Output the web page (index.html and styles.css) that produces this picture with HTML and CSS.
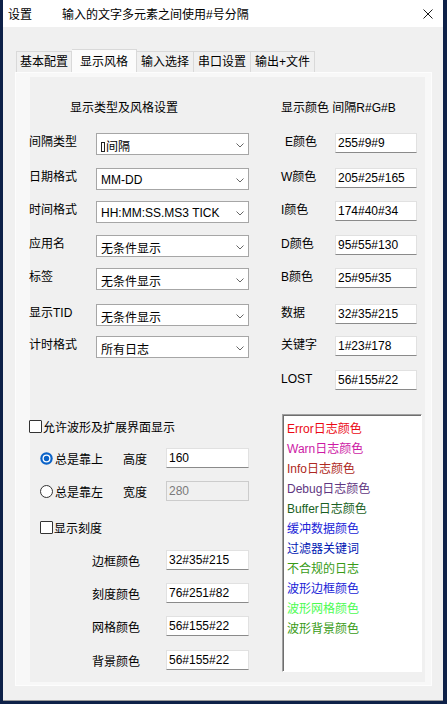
FILE: index.html
```html
<!DOCTYPE html>
<html lang="zh-CN">
<head>
    <meta charset="UTF-8">
    <meta name="viewport" content="width=device-width, initial-scale=1.0">
    <title>设置</title>
    <link rel="stylesheet" href="styles.css">
</head>
<body>

    <div class="window">
        <div class="titlebar">
            <span class="title-app">设置</span>
            <span class="title-hint">输入的文字多元素之间使用#号分隔</span>
            <svg class="close" width="10" height="10" viewBox="0 0 10 10"><path d="M0.5 0.5 L9.5 9.5 M9.5 0.5 L0.5 9.5" stroke="#1a1a1a" stroke-width="1" fill="none"/></svg>
        </div>

        <div class="tabs">
            <div class="tab">基本配置</div>
            <div class="tab active">显示风格</div>
            <div class="tab">输入选择</div>
            <div class="tab">串口设置</div>
            <div class="tab">输出+文件</div>
        </div>

        <div class="panel">
            <div class="form-grid">
                <div class="heading-left">显示类型及风格设置</div>
                <div class="heading-right">显示颜色 间隔R#G#B</div>

                <div class="lbl">间隔类型</div>
                <div class="combo"><span class="combo-text"><span class="tofu"></span>间隔</span><svg width="8" height="5" viewBox="0 0 8 5"><path d="M0.5 0.5 L4 4 L7.5 0.5" fill="none" stroke="#666"/></svg></div>
                <div class="rlbl e-lbl">E颜色</div>
                <input class="field" type="text" value="255#9#9">

                <div class="lbl">日期格式</div>
                <div class="combo"><span class="combo-text">MM-DD</span><svg width="8" height="5" viewBox="0 0 8 5"><path d="M0.5 0.5 L4 4 L7.5 0.5" fill="none" stroke="#666"/></svg></div>
                <div class="rlbl">W颜色</div>
                <input class="field" type="text" value="205#25#165">

                <div class="lbl">时间格式</div>
                <div class="combo"><span class="combo-text">HH:MM:SS.MS3 TICK</span><svg width="8" height="5" viewBox="0 0 8 5"><path d="M0.5 0.5 L4 4 L7.5 0.5" fill="none" stroke="#666"/></svg></div>
                <div class="rlbl">I颜色</div>
                <input class="field" type="text" value="174#40#34">

                <div class="lbl">应用名</div>
                <div class="combo"><span class="combo-text">无条件显示</span><svg width="8" height="5" viewBox="0 0 8 5"><path d="M0.5 0.5 L4 4 L7.5 0.5" fill="none" stroke="#666"/></svg></div>
                <div class="rlbl">D颜色</div>
                <input class="field" type="text" value="95#55#130">

                <div class="lbl">标签</div>
                <div class="combo"><span class="combo-text">无条件显示</span><svg width="8" height="5" viewBox="0 0 8 5"><path d="M0.5 0.5 L4 4 L7.5 0.5" fill="none" stroke="#666"/></svg></div>
                <div class="rlbl">B颜色</div>
                <input class="field" type="text" value="25#95#35">

                <div class="lbl">显示TID</div>
                <div class="combo"><span class="combo-text">无条件显示</span><svg width="8" height="5" viewBox="0 0 8 5"><path d="M0.5 0.5 L4 4 L7.5 0.5" fill="none" stroke="#666"/></svg></div>
                <div class="rlbl">数据</div>
                <input class="field" type="text" value="32#35#215">

                <div class="lbl">计时格式</div>
                <div class="combo"><span class="combo-text">所有日志</span><svg width="8" height="5" viewBox="0 0 8 5"><path d="M0.5 0.5 L4 4 L7.5 0.5" fill="none" stroke="#666"/></svg></div>
                <div class="rlbl">关键字</div>
                <input class="field" type="text" value="1#23#178">

                <div class="rlbl lost">LOST</div>
                <input class="field" type="text" value="56#155#22">
            </div>

            <div class="lower">
                <div class="lower-left">
                    <div class="check-row">
                        <span class="check"></span>允许波形及扩展界面显示
                    </div>
                    <div class="radio-row first">
                        <svg class="radio" width="13" height="13" viewBox="0 0 13 13"><circle cx="6.5" cy="6.5" r="6.2" fill="#0b63c8"/><circle cx="6.5" cy="6.5" r="4" fill="#fff"/><circle cx="6.5" cy="6.5" r="2.7" fill="#0b63c8"/></svg>
                        <span class="radio-text">总是靠上</span>
                        <span class="mini-lbl">高度</span>
                        <input class="field wide" type="text" value="160">
                    </div>
                    <div class="radio-row">
                        <svg class="radio" width="13" height="13" viewBox="0 0 13 13"><circle cx="6.5" cy="6.5" r="6" fill="#fff" stroke="#333" stroke-width="1"/></svg>
                        <span class="radio-text">总是靠左</span>
                        <span class="mini-lbl">宽度</span>
                        <input class="field wide" type="text" value="280" disabled>
                    </div>
                    <div class="check-row sub">
                        <span class="check"></span>显示刻度
                    </div>
                    <div class="color-row r1">
                        <span class="color-lbl">边框颜色</span>
                        <input class="field wide" type="text" value="32#35#215">
                    </div>
                    <div class="color-row">
                        <span class="color-lbl">刻度颜色</span>
                        <input class="field wide" type="text" value="76#251#82">
                    </div>
                    <div class="color-row">
                        <span class="color-lbl">网格颜色</span>
                        <input class="field wide" type="text" value="56#155#22">
                    </div>
                    <div class="color-row r4">
                        <span class="color-lbl">背景颜色</span>
                        <input class="field wide" type="text" value="56#155#22">
                    </div>
                </div>

                <div class="listbox">
                    <div class="c-error">Error日志颜色</div>
                    <div class="c-warn">Warn日志颜色</div>
                    <div class="c-info">Info日志颜色</div>
                    <div class="c-debug">Debug日志颜色</div>
                    <div class="c-buffer">Buffer日志颜色</div>
                    <div class="c-data">缓冲数据颜色</div>
                    <div class="c-key">过滤器关键词</div>
                    <div class="c-lost">不合规的日志</div>
                    <div class="c-border">波形边框颜色</div>
                    <div class="c-grid">波形网格颜色</div>
                    <div class="c-bg">波形背景颜色</div>
                </div>
            </div>
        </div>
    </div>

</body>
</html>
```

FILE: styles.css
```css
/* Grundlayout */
body {
    margin: 0;
    background-color: #0e2148;
    font-family: "Liberation Sans", "Noto Sans CJK SC", sans-serif;
    font-size: 12px;
    color: #000;
}

.window {
    margin-left: 3px;
    width: 440px;
    height: 700px;
    background-color: #f0f0f0;
    border-bottom: 1px solid #9a9a9a;
}

/* Titelleiste */
.titlebar {
    height: 27px;
    background-color: #fff;
    display: flex;
    align-items: center;
    padding: 0 10px 0 5px;
}

.title-app {
    width: 54px;
}

.title-hint {
    flex: 1;
}

/* Reiter */
.tabs {
    display: flex;
    align-items: flex-end;
    height: 24px;
    margin-top: 22px;
    padding-left: 13px;
}

.tab {
    box-sizing: border-box;
    height: 22px;
    line-height: 21px;
    padding: 0 4px;
    border: 1px solid #d9d9d9;
    border-bottom: none;
    border-left: none;
    background-color: #f0f0f0;
}

.tab:first-child {
    border-left: 1px solid #d9d9d9;
    padding: 0 3px;
}

.tab.active {
    height: 24px;
    line-height: 24px;
    padding: 0 8px;
    background-color: #fbfbfb;
}

.panel {
    box-sizing: border-box;
    width: 415px;
    height: 612px;
    margin-left: 13px;
    background-color: #f0f0f0;
    border-style: solid;
    border-color: #f8f8f8;
    border-width: 4px 6px 3px 14px;
    outline: 1px solid #fdfdfd;
}

/* Obere Einstellungen */
.form-grid {
    display: grid;
    grid-template-columns: 67px 153px 86px 82px;
    grid-template-rows: 33px 35px 33px 34px 33px 36px 32px 34px 22px;
    align-items: start;
    margin: 23px 0 0 -1px;
}

.heading-left {
    grid-column: 1 / span 2;
    padding-left: 41px;
    line-height: 16px;
}

.heading-right {
    grid-column: 3 / span 2;
    padding-left: 32px;
    line-height: 16px;
}

.lbl {
    line-height: 18px;
}

.rlbl {
    line-height: 18px;
    padding-left: 32px;
}

.e-lbl {
    padding-left: 36px;
}

.lost {
    grid-column: 3;
}

.combo {
    box-sizing: border-box;
    height: 22px;
    border: 1px solid #a6a6a6;
    background-color: #fff;
    display: flex;
    align-items: center;
    padding: 2px 4px 0 4px;
}

.combo-text {
    flex: 1;
    white-space: nowrap;
}

.tofu {
    display: inline-block;
    box-sizing: border-box;
    width: 4px;
    height: 10px;
    border: 1px solid #222;
    margin-right: 1px;
    vertical-align: -1px;
}

.field {
    box-sizing: border-box;
    width: 82px;
    height: 20px;
    margin: 0;
    padding: 0 2px;
    border: 1px solid #e1e1e1;
    border-bottom-color: #8a8a8a;
    background-color: #fff;
    font: inherit;
    color: #000;
}

.field.wide {
    width: 83px;
}

.field:disabled {
    background-color: #f0f0f0;
    border-color: #cccccc;
    color: #7a7a7a;
}

/* Untere Einstellungen */
.lower {
    display: flex;
    margin: 22px 0 0 -1px;
}

.lower-left {
    width: 220px;
}

.check-row {
    display: flex;
    align-items: center;
    height: 16px;
    margin-top: 4px;
}

.check-row.sub {
    padding-left: 11px;
    margin-top: 18px;
}

.check {
    box-sizing: border-box;
    width: 13px;
    height: 13px;
    border: 1px solid #333;
    border-radius: 1px;
    background-color: #fff;
    margin-right: 1px;
}

.radio-row {
    display: flex;
    align-items: center;
    height: 20px;
    padding-left: 11px;
    margin-top: 13px;
}

.radio-row.first {
    margin-top: 14px;
}

.radio {
    margin-right: 2px;
}

.radio-text {
    width: 68px;
}

.mini-lbl {
    width: 43px;
}

.color-row {
    display: flex;
    align-items: center;
    height: 20px;
    padding-left: 63px;
    margin-top: 13px;
}

.color-row.r1 {
    margin-top: 15px;
}

.color-row.r4 {
    margin-top: 14px;
}

.color-lbl {
    width: 74px;
}

.listbox {
    box-sizing: border-box;
    width: 140px;
    height: 258px;
    margin-left: 33px;
    padding: 4px 0 0 4px;
    background-color: #fff;
    border: 1px solid;
    border-color: #a0a0a0 #fff #fff #a0a0a0;
    box-shadow: inset 1px 1px 0 #6e6e6e;
}

.listbox div {
    line-height: 20px;
    white-space: nowrap;
}

.c-error { color: rgb(235, 9, 20); }
.c-warn { color: rgb(205, 25, 165); }
.c-info { color: rgb(174, 40, 34); }
.c-debug { color: rgb(95, 55, 130); }
.c-buffer { color: rgb(25, 95, 35); }
.c-data { color: rgb(32, 35, 215); }
.c-key { color: rgb(1, 23, 178); }
.c-lost { color: rgb(56, 155, 22); }
.c-border { color: rgb(32, 35, 215); }
.c-grid { color: rgb(76, 251, 82); }
.c-bg { color: rgb(56, 155, 22); }
```
